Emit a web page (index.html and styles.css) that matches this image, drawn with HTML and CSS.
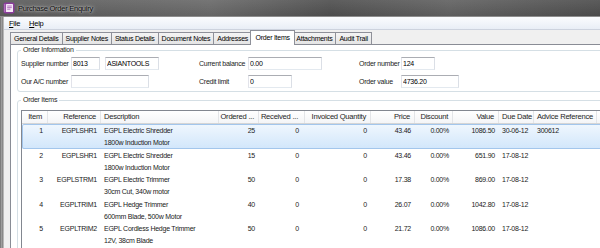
FILE: index.html
```html
<!DOCTYPE html>
<html lang="en">
<head>
    <meta charset="UTF-8">
    <title>Purchase Order Enquiry</title>
    <link rel="stylesheet" href="styles.css">
</head>
<body>
<div class="window">
    <div class="titlebar">
        <svg class="app-icon" viewBox="0 0 12 12" width="12" height="12">
            <rect x="0.5" y="0.5" width="11" height="11" rx="2" fill="#8a3d9c"/>
            <rect x="3" y="2" width="7" height="8" rx="0.5" fill="#f6e8f7"/>
            <path d="M4.2 4h4.6M4.2 5.6h4.6M4.2 7.2h3.2" stroke="#a25bb0" stroke-width="0.8"/>
            <path d="M1.8 2.5v7" stroke="#f0d4f4" stroke-width="1" stroke-dasharray="1 1"/>
        </svg>
        <span class="title-text">Purchase Order Enquiry</span>
    </div>
    <div class="frame">
        <div class="frame-edge"></div>
        <div class="client">
            <div class="menubar">
                <span><u>F</u>ile</span>
                <span><u>H</u>elp</span>
            </div>

            <div class="tabs">
                <div class="tab">General Details</div>
                <div class="tab">Supplier Notes</div>
                <div class="tab">Status Details</div>
                <div class="tab">Document Notes</div>
                <div class="tab">Addresses</div>
                <div class="tab active">Order Items</div>
                <div class="tab">Attachments</div>
                <div class="tab">Audit Trail</div>
            </div>

            <div class="panel">
                <fieldset class="group">
                    <legend>Order Information</legend>
                    <div class="info-grid">
                        <label>Supplier number</label>
                        <div class="pair">
                            <input class="in-supplier" type="text" value="8013" readonly>
                            <input class="in-supplier-name" type="text" value="ASIANTOOLS" readonly>
                        </div>
                        <label>Current balance</label>
                        <div><input class="in-balance" type="text" value="0.00" readonly></div>
                        <label>Order number</label>
                        <div><input class="in-order-no" type="text" value="124" readonly></div>

                        <label>Our A/C number</label>
                        <div><input class="in-account" type="text" value="" readonly></div>
                        <label>Credit limit</label>
                        <div><input class="in-credit" type="text" value="0" readonly></div>
                        <label>Order value</label>
                        <div><input class="in-order-value" type="text" value="4736.20" readonly></div>
                    </div>
                </fieldset>

                <fieldset class="group items">
                    <legend>Order Items</legend>
                    <div class="listview">
                        <div class="lv-head">
                            <div class="c-item r">Item</div>
                            <div class="r">Reference</div>
                            <div class="l">Description</div>
                            <div class="r">Ordered ...</div>
                            <div class="c-recv r">Received ...</div>
                            <div class="r">Invoiced Quantity</div>
                            <div class="r">Price</div>
                            <div class="r">Discount</div>
                            <div class="r">Value</div>
                            <div class="l">Due Date</div>
                            <div class="l">Advice Reference</div>
                            <div></div>
                        </div>

                        <div class="lv-row selected">
                            <div class="c-item r">1</div>
                            <div class="r">EGPLSHR1</div>
                            <div class="l">EGPL Electric Shredder<br>1800w Induction Motor</div>
                            <div class="r">25</div>
                            <div class="c-recv r">0</div>
                            <div class="r">0</div>
                            <div class="r">43.46</div>
                            <div class="r">0.00%</div>
                            <div class="r">1086.50</div>
                            <div class="l">30-06-12</div>
                            <div class="l">300612</div>
                            <div></div>
                        </div>
                        <div class="lv-row">
                            <div class="c-item r">2</div>
                            <div class="r">EGPLSHR1</div>
                            <div class="l">EGPL Electric Shredder<br>1800w Induction Motor</div>
                            <div class="r">15</div>
                            <div class="c-recv r">0</div>
                            <div class="r">0</div>
                            <div class="r">43.46</div>
                            <div class="r">0.00%</div>
                            <div class="r">651.90</div>
                            <div class="l">17-08-12</div>
                            <div class="l"></div>
                            <div></div>
                        </div>
                        <div class="lv-row">
                            <div class="c-item r">3</div>
                            <div class="r">EGPLSTRM1</div>
                            <div class="l">EGPL Electric Trimmer<br>30cm Cut, 340w motor</div>
                            <div class="r">50</div>
                            <div class="c-recv r">0</div>
                            <div class="r">0</div>
                            <div class="r">17.38</div>
                            <div class="r">0.00%</div>
                            <div class="r">869.00</div>
                            <div class="l">17-08-12</div>
                            <div class="l"></div>
                            <div></div>
                        </div>
                        <div class="lv-row">
                            <div class="c-item r">4</div>
                            <div class="r">EGPLTRIM1</div>
                            <div class="l">EGPL Hedge Trimmer<br>600mm Blade, 500w Motor</div>
                            <div class="r">40</div>
                            <div class="c-recv r">0</div>
                            <div class="r">0</div>
                            <div class="r">26.07</div>
                            <div class="r">0.00%</div>
                            <div class="r">1042.80</div>
                            <div class="l">17-08-12</div>
                            <div class="l"></div>
                            <div></div>
                        </div>
                        <div class="lv-row">
                            <div class="c-item r">5</div>
                            <div class="r">EGPLTRIM2</div>
                            <div class="l">EGPL Cordless Hedge Trimmer<br>12V, 38cm Blade</div>
                            <div class="r">50</div>
                            <div class="c-recv r">0</div>
                            <div class="r">0</div>
                            <div class="r">21.72</div>
                            <div class="r">0.00%</div>
                            <div class="r">1086.00</div>
                            <div class="l">17-08-12</div>
                            <div class="l"></div>
                            <div></div>
                        </div>
                    </div>
                </fieldset>
            </div>
        </div>
    </div>
</div>
</body>
</html>
```

FILE: styles.css
```css
* {
    box-sizing: border-box;
}
body {
    margin: 0;
    font-family: "Liberation Sans", Arial, sans-serif;
    font-size: 7px;
    letter-spacing: -0.25px;
    color: #1c1c1c;
    background: #f0f0f0;
}
.window {
    width: 600px;
    height: 248px;
    overflow: hidden;
    display: flex;
    flex-direction: column;
}

/* title bar */
.titlebar {
    flex: none;
    height: 17px;
    display: flex;
    align-items: center;
    gap: 3px;
    padding-left: 3px;
    background:
        linear-gradient(to bottom, rgba(255,255,255,0.08), rgba(0,0,0,0.05)),
        linear-gradient(to right, #5b5b5b, #6a6a6a 35%, #505050 55%, #626262 75%, #4e4e4e);
    border-bottom: 1px solid #8d8d8d;
}
.app-icon {
    flex: none;
}
.title-text {
    font-size: 7.5px;
    color: #0a0a0a;
    text-shadow: 0 0 2px rgba(235,235,235,0.9), 0 0 5px rgba(220,220,220,0.8);
}

.frame {
    flex: 1;
    display: flex;
    min-height: 0;
}
.frame-edge {
    flex: none;
    width: 4px;
    background: linear-gradient(to right, #626262, #a6a6a6 30%, #858585 60%, #cfcfcf);
}
.client {
    flex: 1;
    min-width: 0;
    display: flex;
    flex-direction: column;
    background: #f0f0f0;
}

/* menu */
.menubar {
    flex: none;
    height: 13px;
    display: flex;
    align-items: center;
    gap: 9px;
    padding-left: 5px;
    font-size: 7.5px;
    color: #000;
    background: linear-gradient(to bottom, #fbfcfe, #e9eef6);
    border-bottom: 1px solid #cdd3de;
}

/* tabs */
.tabs {
    flex: none;
    height: 14px;
    display: flex;
    align-items: flex-end;
    padding-left: 7px;
}
.tab {
    height: 12px;
    line-height: 11px;
    padding: 0 3px;
    margin-left: -1px;
    color: #000;
    border: 1px solid #8e9099;
    border-bottom: none;
    background: linear-gradient(to bottom, #f4f4f4, #e4e4e4);
    white-space: nowrap;
}
.tab.active {
    position: relative;
    z-index: 1;
    height: 15px;
    line-height: 13px;
    margin: 0 -2px -1px -2px;
    padding: 0 4.5px;
    background: #fff;
}

/* tab page */
.panel {
    flex: 1;
    margin-left: 6px;
    padding: 1px 0 0 6px;
    background: #fff;
    border-top: 1px solid #898c95;
    border-left: 1px solid #898c95;
}
.group {
    margin: 0 -60px 0 0;
    padding: 3px 0 3px 3px;
    min-width: 0;
    border: 1px solid #d5dfe5;
    border-radius: 3px;
}
.group legend {
    padding: 0 2px;
    line-height: 8px;
    color: #1e1e1e;
}
.group.items {
    margin-top: 4px;
    padding: 6px 0 0 3px;
    height: 200px;
}

.info-grid {
    display: grid;
    grid-template-columns: 50px 128px 49px 111px 42px 58px;
    row-gap: 5px;
    align-items: center;
}
.info-grid label {
    line-height: 13px;
    white-space: nowrap;
}
.pair {
    display: flex;
    gap: 5px;
}
.info-grid input {
    display: block;
    height: 13px;
    padding: 0 1px;
    font: inherit;
    letter-spacing: inherit;
    color: #000;
    background: #fff;
    border: 1px solid;
    border-color: #abadb3 #dbdfe6 #e3e9ef #e2e3ea;
    outline: none;
}
.in-supplier { width: 29px; }
.in-supplier-name { width: 54px; }
.in-account { width: 78px; }
.in-balance { width: 74px; }
.in-credit { width: 44px; }
.in-order-no { width: 34px; }
.in-order-value { width: 58px; }

/* list view */
.listview {
    background: #fff;
    border-top: 1px solid #828790;
    border-left: 1px solid #828790;
    height: 100%;
}
.lv-head,
.lv-row {
    display: grid;
    grid-template-columns: 26px 53px 118px 40px 46px 66px 44px 38px 46px 35px 63px 1fr;
}
.lv-head {
    height: 13px;
    font-size: 7.6px;
    color: #1e1e1e;
    background: linear-gradient(to bottom, #ffffff, #f4f5f7);
    border-bottom: 1px solid #d5d5d5;
}
.lv-head > div {
    line-height: 12px;
    white-space: nowrap;
    overflow: hidden;
    border-right: 1px solid #e3e5e8;
}
.lv-row {
    height: 24.5px;
    color: #222;
}
.lv-row > div {
    padding-top: 1px;
    line-height: 12px;
    white-space: nowrap;
}
.lv-row.selected {
    border-radius: 2px;
    background: linear-gradient(to bottom, #f0f7fe, #d1e6fb);
    box-shadow: inset 0 0 0 1px #a3c6ec;
}
.r {
    text-align: right;
    padding-right: 4px;
}
.l {
    text-align: left;
    padding-left: 3px;
}
.c-item {
    padding-right: 5px;
}
.c-recv {
    padding-right: 6px;
}
```
